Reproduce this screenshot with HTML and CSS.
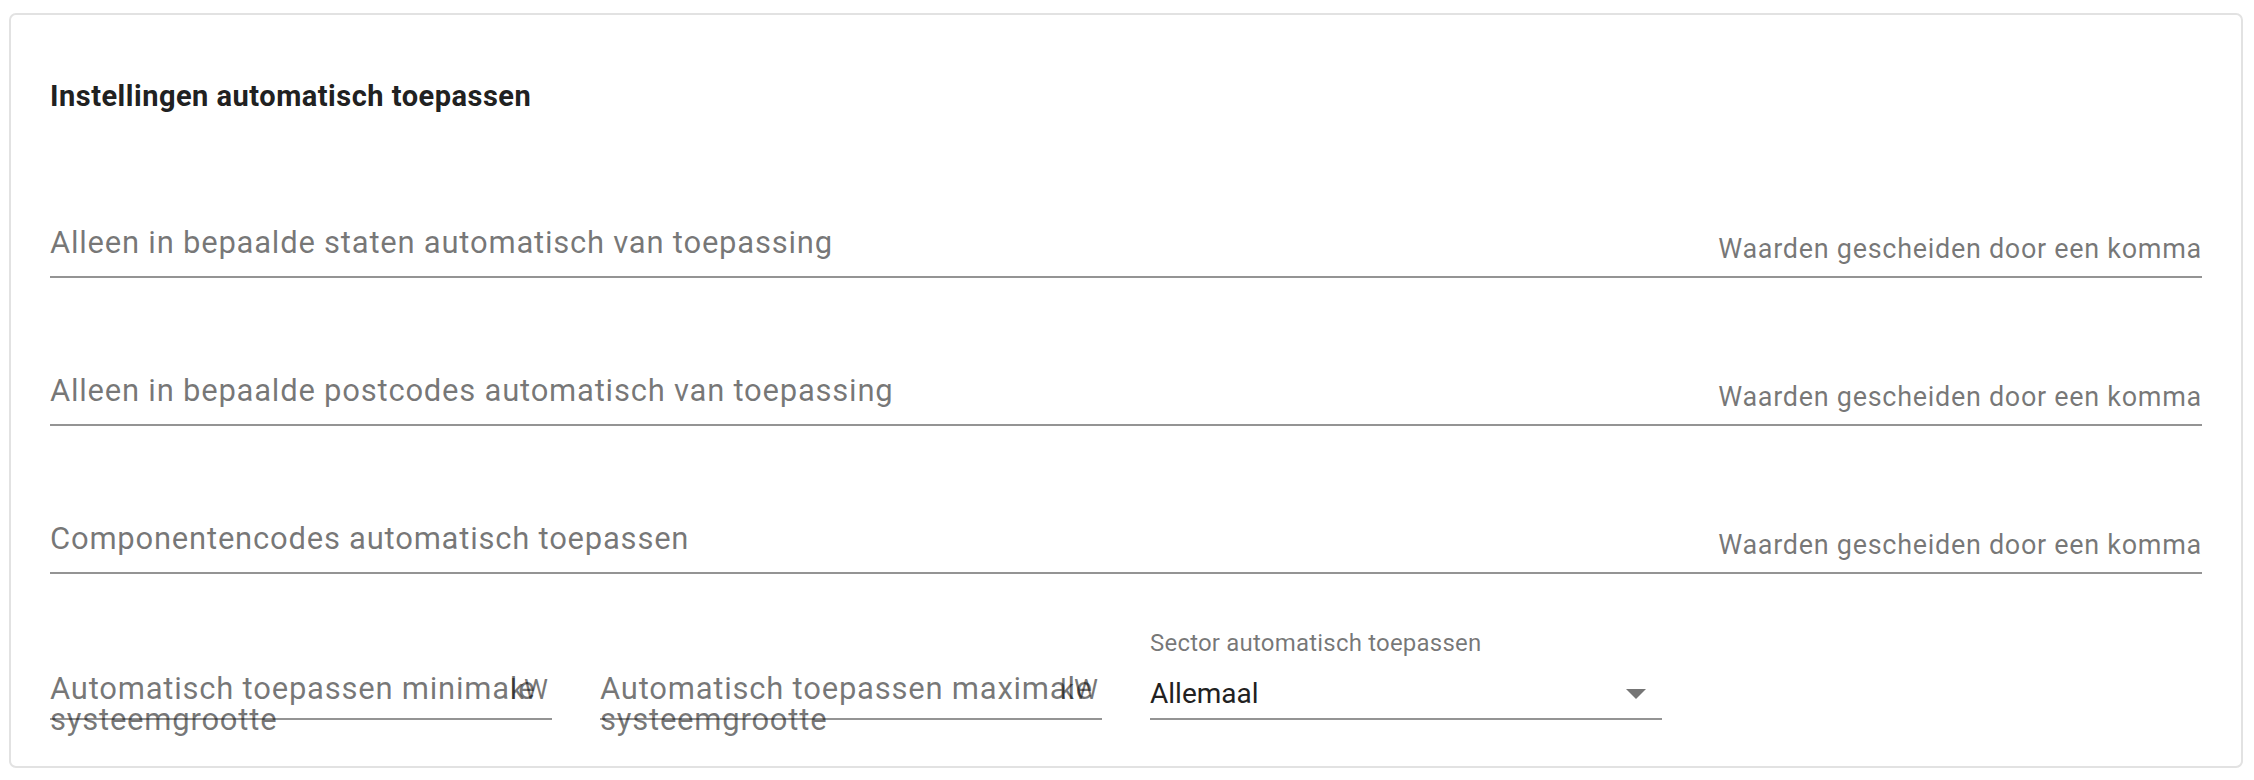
FILE: index.html
```html
<!DOCTYPE html>
<html lang="nl">
<head>
    <meta charset="UTF-8">
    <meta name="viewport" content="width=device-width, initial-scale=1.0">
    <title>Instellingen automatisch toepassen</title>
    <link rel="stylesheet" href="styles.css">
</head>
<body>
    <div class="card">
        <h2 class="card-title">Instellingen automatisch toepassen</h2>

        <div class="text-field">
            <span class="field-label">Alleen in bepaalde staten automatisch van toepassing</span>
            <span class="field-helper">Waarden gescheiden door een komma</span>
        </div>
        <div class="text-field">
            <span class="field-label">Alleen in bepaalde postcodes automatisch van toepassing</span>
            <span class="field-helper">Waarden gescheiden door een komma</span>
        </div>
        <div class="text-field">
            <span class="field-label">Componentencodes automatisch toepassen</span>
            <span class="field-helper">Waarden gescheiden door een komma</span>
        </div>

        <div class="bottom-row">
            <div class="num-field">
                <label class="num-label">Automatisch toepassen minimale<br>systeemgrootte</label>
                <span class="unit">kW</span>
            </div>
            <div class="num-field">
                <label class="num-label">Automatisch toepassen maximale<br>systeemgrootte</label>
                <span class="unit">kW</span>
            </div>
            <div class="select-field">
                <label class="select-label">Sector automatisch toepassen</label>
                <div class="select-value">
                    <span>Allemaal</span>
                    <svg class="select-arrow" width="20" height="10" viewBox="0 0 20 10">
                        <path d="M0 0 L10 10 L20 0 Z"/>
                    </svg>
                </div>
            </div>
        </div>
    </div>
</body>
</html>
```

FILE: styles.css
```css
body {
    margin: 0;
    padding: 0;
    background: #fff;
    font-family: Roboto, "Liberation Sans", Arial, sans-serif;
}

.card {
    margin: 13px 0 0 9px;
    width: 2234px;
    box-sizing: border-box;
    border: 2px solid #e2e2e2;
    border-radius: 7px;
    padding: 65px 39px 46px 39px;
    background: #fff;
}

.card-title {
    margin: 0;
    font-size: 29px;
    line-height: 32px;
    letter-spacing: 0.5px;
    font-weight: 700;
    color: #212121;
}

.text-field {
    display: flex;
    justify-content: space-between;
    align-items: flex-end;
    border-bottom: 2px solid rgba(0, 0, 0, 0.42);
    margin-top: 95px;
}

.card-title + .text-field {
    margin-top: 113px;
}

.field-label {
    font-size: 31px;
    line-height: 36px;
    letter-spacing: 0.77px;
    padding-bottom: 15px;
    color: rgba(0, 0, 0, 0.54);
}

.field-helper {
    font-size: 27px;
    line-height: 36px;
    letter-spacing: 0.7px;
    padding-bottom: 9px;
    color: rgba(0, 0, 0, 0.54);
}

.bottom-row {
    display: flex;
    align-items: flex-end;
    gap: 48px;
    margin-top: 55px;
}

.num-field {
    position: relative;
    width: 502px;
    display: flex;
    justify-content: flex-end;
    padding-bottom: 10px;
    border-bottom: 2px solid rgba(0, 0, 0, 0.42);
}

/* label overlays the input, as in the original */
.num-label {
    position: absolute;
    left: 0;
    top: 1px;
    font-size: 31px;
    line-height: 31px;
    letter-spacing: 0.77px;
    white-space: nowrap;
    color: rgba(0, 0, 0, 0.54);
}

.unit {
    font-size: 27px;
    line-height: 36px;
    margin-right: 4px;
    color: rgba(0, 0, 0, 0.54);
}

.select-field {
    width: 512px;
}

.select-label {
    display: block;
    font-size: 24px;
    line-height: 28px;
    letter-spacing: 0.2px;
    color: rgba(0, 0, 0, 0.54);
    margin-bottom: 19px;
}

.select-value {
    display: flex;
    justify-content: space-between;
    align-items: center;
    font-size: 28px;
    line-height: 36px;
    color: #212121;
    padding-bottom: 6px;
    border-bottom: 2px solid rgba(0, 0, 0, 0.42);
}

.select-arrow {
    fill: rgba(0, 0, 0, 0.54);
    margin-right: 16px;
}
```
